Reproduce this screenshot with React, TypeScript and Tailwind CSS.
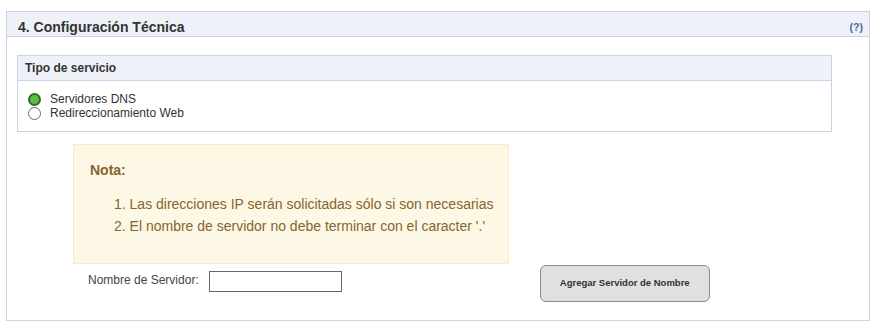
import React from "react";

const Radio: React.FC<{ checked?: boolean }> = ({ checked }) =>
  checked ? (
    <span className="w-[13px] h-[13px] rounded-full border-[2px] border-[#2f6f24] bg-[#5bbd4a] shrink-0" />
  ) : (
    <span className="w-[13px] h-[13px] rounded-full border border-[#6b6b6b] bg-white shrink-0" />
  );

export default function App() {
  return (
    <div className="w-[879px] h-[326px] bg-white pt-[11px] pl-[6px] font-['Liberation_Sans',Arial,sans-serif]">
      <div className="w-[864px] h-[310px] border border-[#c8d4e6] flex flex-col">
        <div className="h-[25px] bg-[#eef2f8] border-b border-[#c8d4e6] flex items-center justify-between pt-[6px] pl-[11px] pr-[6px]">
          <span className="text-[14px] font-bold text-[#333] leading-[16px]">4. Configuración Técnica</span>
          <span className="text-[10.5px] font-bold text-[#4d66a0] leading-[12px]">(?)</span>
        </div>

        <div className="ml-[10px] mt-[18px] w-[815px] border border-[#c8d4e6]">
          <div className="h-[25px] bg-[#eef2f8] border-b border-[#c8d4e6] flex items-center pl-[7px]">
            <span className="text-[12px] font-bold text-[#333]">Tipo de servicio</span>
          </div>
          <div className="h-[50px] flex flex-col justify-center pl-[10px] text-[12px] text-[#333] leading-[14px]">
            <label className="flex items-center gap-[9px]">
              <Radio checked />
              <span>Servidores DNS</span>
            </label>
            <label className="flex items-center gap-[9px]">
              <Radio />
              <span>Redireccionamiento Web</span>
            </label>
          </div>
        </div>

        <div className="ml-[66px] mt-[12px] w-[436px] h-[120px] bg-[#fdf8e5] border border-[#f8ebc6] pl-[16px] pt-[17px] text-[#85652f]">
          <div className="text-[14px] font-bold leading-[16px]">Nota:</div>
          <ol className="mt-[15px] pl-[24px] text-[14px] leading-[22px]">
            <li>1. Las direcciones IP serán solicitadas sólo si son necesarias</li>
            <li>2. El nombre de servidor no debe terminar con el caracter '.'</li>
          </ol>
        </div>

        <div className="flex items-start mt-[1px] h-[37px]">
          <span className="ml-[81px] mt-[8px] text-[12px] leading-[14px] text-[#444]">Nombre de Servidor:</span>
          <input className="ml-[10px] mt-[6px] w-[133px] h-[21px] border border-[#666] bg-white outline-none" />
          <button className="ml-[198px] w-[170px] h-[37px] rounded-[6px] border border-[#8a8a8a] bg-[#e0e0e0] text-[9.5px] font-bold text-[#333]">
            Agregar Servidor de Nombre
          </button>
        </div>
      </div>
    </div>
  );
}
